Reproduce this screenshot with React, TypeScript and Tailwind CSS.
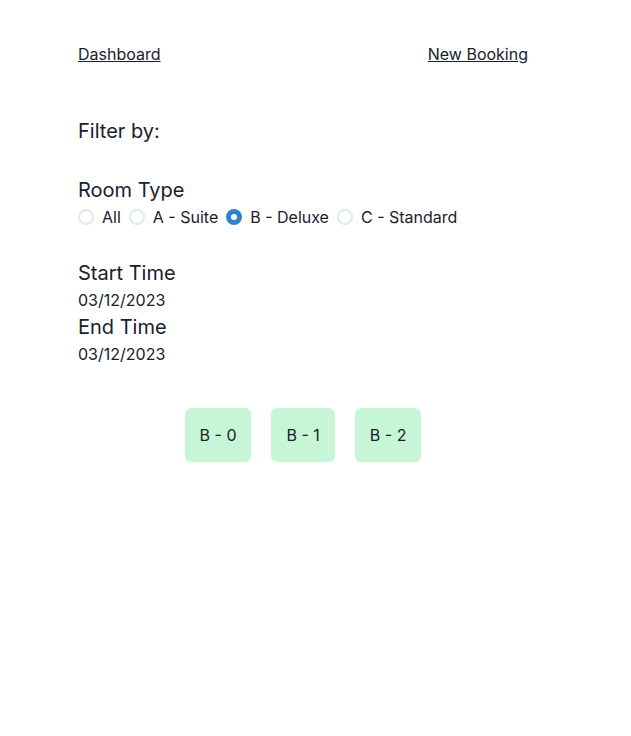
import React from "react";

function Radio({ label, checked }: { label: string; checked?: boolean }) {
  return (
    <label className="flex items-center">
      {checked ? (
        <span className="w-4 h-4 rounded-full bg-[#3182ce] border-2 border-[#3182ce] flex items-center justify-center">
          <span className="w-[6px] h-[6px] rounded-full bg-white" />
        </span>
      ) : (
        <span className="w-4 h-4 rounded-full border-2 border-[#e2e8f0] bg-white" />
      )}
      <span className="ml-2 text-base leading-6">{label}</span>
    </label>
  );
}

export default function App() {
  return (
    <div
      className="min-h-[736px] bg-white text-[#1a202c]"
      style={{ fontFamily: "Inter, 'Noto Sans', sans-serif" }}
    >
      <div className="ml-[78px] w-[450px] pt-[42px]">
        <nav className="flex justify-between text-base leading-6">
          <a className="underline" href="#">Dashboard</a>
          <a className="underline" href="#">New Booking</a>
        </nav>
        <h2 className="mt-[50px] text-xl leading-[30px]">Filter by:</h2>
        <div className="mt-[29px]">
          <div className="text-xl leading-[30px]">Room Type</div>
          <div className="flex items-center gap-2">
            <Radio label="All" />
            <Radio label="A - Suite" />
            <Radio label="B - Deluxe" checked />
            <Radio label="C - Standard" />
          </div>
        </div>
        <div className="mt-[29px]">
          <div className="text-xl leading-[30px]">Start Time</div>
          <div className="text-base leading-6">03/12/2023</div>
          <div className="text-xl leading-[30px]">End Time</div>
          <div className="text-base leading-6">03/12/2023</div>
        </div>
        <div className="mt-[42px] flex justify-center gap-5">
          {["B - 0", "B - 1", "B - 2"].map((b) => (
            <button
              key={b}
              className="bg-[#c6f6d5] rounded-md px-[15px] h-[54px] text-base leading-6"
            >
              {b}
            </button>
          ))}
        </div>
      </div>
    </div>
  );
}
